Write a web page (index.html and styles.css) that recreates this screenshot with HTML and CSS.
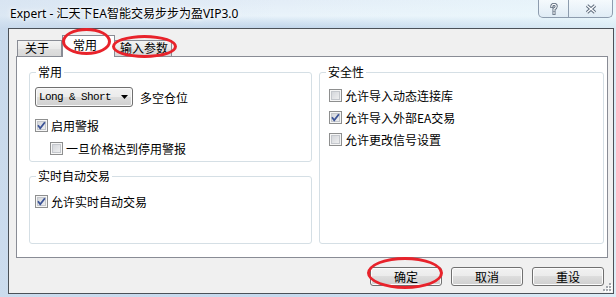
FILE: index.html
```html
<!DOCTYPE html>
<html lang="zh-CN">
<head>
    <meta charset="UTF-8">
    <meta name="viewport" content="width=device-width, initial-scale=1.0">
    <title>Expert - 汇天下EA智能交易步步为盈VIP3.0</title>
    <link rel="stylesheet" href="styles.css">
</head>
<body>
    <div class="window">
        <div class="titlebar">
            <span class="title">Expert - 汇天下EA智能交易步步为盈VIP3.0</span>
            <div class="caption-buttons">
                <span class="cap-btn help">
                    <svg width="8" height="12" viewBox="0 0 8 12">
                        <path d="M1.8 3.6Q1.8 1.4 4 1.4Q6.2 1.4 6.2 3.4Q6.2 4.8 4 6L4 7.6M4 9.4L4 10.6" fill="none" stroke="#5d6b7c" stroke-width="3" stroke-linecap="square"/>
                        <path d="M1.8 3.6Q1.8 1.4 4 1.4Q6.2 1.4 6.2 3.4Q6.2 4.8 4 6L4 7.6M4 9.4L4 10.6" fill="none" stroke="#fbfdff" stroke-width="1.2" stroke-linecap="square"/>
                    </svg>
                </span>
                <span class="cap-btn close">
                    <svg width="12" height="10" viewBox="0 0 12 10">
                        <path d="M2 1.5L10 8.5M10 1.5L2 8.5" fill="none" stroke="#5d6b7c" stroke-width="3.4"/>
                        <path d="M2 1.5L10 8.5M10 1.5L2 8.5" fill="none" stroke="#fbfdff" stroke-width="1.4"/>
                    </svg>
                </span>
            </div>
        </div>

        <div class="frame">
            <div class="client">
                <div class="tabs">
                    <span class="tab tab-about">关于</span>
                    <span class="tab tab-common active">常用</span>
                    <span class="tab tab-inputs">输入参数</span>
                </div>

                <div class="panel">
                    <div class="column column-left">
                        <fieldset class="group group-common">
                            <legend>常用</legend>
                            <div class="combo-row">
                                <div class="combo">
                                    <span class="combo-text">Long &amp; Short</span>
                                    <svg class="combo-arrow" width="7" height="4" viewBox="0 0 7 4"><path d="M0 0H7L3.5 4Z" fill="#000"/></svg>
                                </div>
                                <span class="combo-label">多空仓位</span>
                            </div>
                            <label class="check first">
                                <span class="box"><svg width="11" height="11" viewBox="0 0 11 11"><path d="M2 5.3L4.2 8.2L8.9 2.3" fill="none" stroke="#3b5396" stroke-width="1.8"/></svg></span>启用警报
                            </label>
                            <label class="check sub">
                                <span class="box"></span>一旦价格达到停用警报
                            </label>
                        </fieldset>

                        <fieldset class="group group-live">
                            <legend>实时自动交易</legend>
                            <label class="check first">
                                <span class="box"><svg width="11" height="11" viewBox="0 0 11 11"><path d="M2 5.3L4.2 8.2L8.9 2.3" fill="none" stroke="#3b5396" stroke-width="1.8"/></svg></span>允许实时自动交易
                            </label>
                        </fieldset>
                    </div>

                    <div class="column column-right">
                        <fieldset class="group group-safe">
                            <legend>安全性</legend>
                            <label class="check first">
                                <span class="box"></span>允许导入动态连接库
                            </label>
                            <label class="check">
                                <span class="box"><svg width="11" height="11" viewBox="0 0 11 11"><path d="M2 5.3L4.2 8.2L8.9 2.3" fill="none" stroke="#3b5396" stroke-width="1.8"/></svg></span>允许导入外部EA交易
                            </label>
                            <label class="check">
                                <span class="box"></span>允许更改信号设置
                            </label>
                        </fieldset>
                    </div>
                </div>

                <div class="buttons">
                    <button type="button">确定</button>
                    <button type="button">取消</button>
                    <button type="button">重设</button>
                </div>

                <!-- size grip -->
                <svg class="grip" width="10" height="10" viewBox="0 0 10 10">
                    <g fill="#fff">
                        <rect x="8" y="2" width="2" height="2"/>
                        <rect x="5" y="5" width="2" height="2"/><rect x="8" y="5" width="2" height="2"/>
                        <rect x="2" y="8" width="2" height="2"/><rect x="5" y="8" width="2" height="2"/><rect x="8" y="8" width="2" height="2"/>
                    </g>
                    <g fill="#a3a7ad">
                        <rect x="7" y="1" width="2" height="2"/>
                        <rect x="4" y="4" width="2" height="2"/><rect x="7" y="4" width="2" height="2"/>
                        <rect x="1" y="7" width="2" height="2"/><rect x="4" y="7" width="2" height="2"/><rect x="7" y="7" width="2" height="2"/>
                    </g>
                </svg>
            </div>
        </div>

        <!-- red marks drawn over the screenshot -->
        <span class="mark mark-common"></span>
        <span class="mark mark-inputs"></span>
        <span class="mark mark-ok"></span>
    </div>
</body>
</html>
```

FILE: styles.css
```css
/* General styling */
* {
    box-sizing: border-box;
}

body {
    margin: 0;
    font-family: "Noto Sans CJK SC", sans-serif;
    font-size: 12px;
    color: #000;
}

.window {
    position: relative;
    width: 616px;
    height: 297px;
    overflow: hidden;
    background:
        linear-gradient(to right, rgba(208, 222, 238, 0.55) 0, rgba(255, 255, 255, 0) 45%, rgba(236, 250, 253, 0.6) 100%),
        linear-gradient(#e3edf7 0, #e9f3fa 16px, #d3e3f2 22px, #c1d5ea 28px, #c6d9ed 100%);
}

/* Title bar */
.titlebar {
    display: flex;
    height: 28px;
}

.title {
    padding-left: 10px;
    line-height: 28px;
    font-family: "Noto Sans", "Noto Sans CJK SC", sans-serif;
    font-size: 12px;
    text-shadow: 0 0 6px #fff, 0 0 3px #fff;
}

.caption-buttons {
    display: flex;
    height: 18px;
    margin-left: auto;
    margin-right: 3px;
    border: 1px solid #8d9cae;
    border-top: none;
    border-radius: 0 0 5px 5px;
    background: linear-gradient(rgba(250, 252, 254, 0.7), rgba(220, 232, 243, 0.7));
}

.cap-btn {
    display: flex;
    align-items: center;
    justify-content: center;
}

.help {
    width: 30px;
    border-right: 1px solid #8d9cae;
}

.close {
    width: 43px;
}

/* Client area */
.frame {
    display: flex;
    height: 269px;
    padding: 0 2px 3px 8px;
}

.client {
    position: relative;
    width: 606px;
    height: 266px;
    border: 1px solid #4b5158;
    background-color: #f0f0f0;
}

/* Tabs */
.tabs {
    display: flex;
    align-items: flex-end;
    height: 27px;
    padding-left: 8px;
}

.tab {
    height: 16px;
    border: 1px solid #898c95;
    border-bottom: none;
    background: linear-gradient(#f3f3f3, #e9e9e9 50%, #e0e0e0 50%, #d8d8d8);
    line-height: 14px;
}

.tab-about {
    width: 45px;
    padding-left: 7px;
}

.tab-common {
    width: 53px;
    padding-left: 10px;
}

.tab-inputs {
    width: 57px;
    padding-left: 5px;
    border-left: none;
}

.tab.active {
    position: relative;
    z-index: 1;
    height: 22px;
    margin-bottom: -1px;
    background: #fff;
    line-height: 18px;
}

.panel {
    display: flex;
    gap: 7px;
    width: 592px;
    height: 202px;
    margin-left: 7px;
    padding: 8px 3px 0 12px;
    border: 1px solid #898c95;
    background-color: #fff;
}

.column {
    display: flex;
    flex-direction: column;
    gap: 7px;
}

.column-left {
    width: 283px;
}

.column-right {
    width: 285px;
}

/* Group boxes */
.group {
    margin: 0;
    padding: 0;
    min-width: 0;
    border: 1px solid #d5dfe5;
    border-radius: 3px;
}

.group legend {
    margin-left: 6px;
    padding: 0 2px;
    line-height: 14px;
}

.group-common {
    height: 97px;
}

.group-live {
    height: 75px;
}

.group-safe {
    height: 179px;
}

.combo-row {
    display: flex;
    align-items: center;
    height: 20px;
    margin: 8px 0 0 5px;
}

.combo {
    display: flex;
    align-items: center;
    width: 98px;
    height: 20px;
    padding-left: 3px;
    border: 1px solid #707070;
    border-radius: 3px;
    background: linear-gradient(#f2f2f2, #ebebeb 50%, #dddddd 50%, #cfcfcf);
    box-shadow: inset 0 0 0 1px #fafafa;
}

.combo-text {
    font-family: "Liberation Mono", monospace;
    font-size: 11px;
    letter-spacing: -0.6px;
}

.combo-arrow {
    margin-left: auto;
    margin-right: 4px;
}

.combo-label {
    margin-left: 7px;
}

/* Check boxes */
.check {
    display: flex;
    align-items: center;
    height: 17px;
    margin-top: 5px;
    margin-left: 5px;
}

.check.first {
    margin-top: 10px;
}

.check.sub {
    margin-top: 6px;
    margin-left: 20px;
}

.group-safe .check {
    margin-left: 9px;
}

.group-safe .check.first {
    margin-top: 8px;
}

.box {
    display: flex;
    width: 13px;
    height: 13px;
    margin-right: 3px;
    border: 1px solid #8e8f8f;
    background: linear-gradient(135deg, #cdd0d5, #f5f5f5);
    box-shadow: inset 0 0 0 1px #f6f6f6, inset 0 0 0 2px #c4c7cc;
}

/* Bottom buttons */
.buttons {
    display: flex;
    justify-content: flex-end;
    gap: 9px;
    margin-top: 9px;
    padding-right: 9px;
}

.buttons button {
    width: 72px;
    height: 19px;
    padding: 0;
    border: 1px solid #707070;
    border-radius: 3px;
    background: linear-gradient(#f2f2f2, #ebebeb 50%, #dddddd 50%, #cfcfcf);
    box-shadow: inset 0 0 0 1px #fcfcfc;
    font-family: "Noto Sans CJK SC", sans-serif;
    font-size: 12px;
    line-height: 16px;
    color: #000;
}

.grip {
    position: absolute;
    right: 1px;
    bottom: 1px;
}

/* Red annotation ellipses */
.mark {
    position: absolute;
    z-index: 2;
    border: 3px solid #e8232b;
    border-radius: 50%;
}

.mark-common {
    left: 62px;
    top: 28px;
    width: 49px;
    height: 27px;
}

.mark-inputs {
    left: 112px;
    top: 35px;
    width: 65px;
    height: 23px;
}

.mark-ok {
    left: 367px;
    top: 257px;
    width: 76px;
    height: 32px;
}
```
